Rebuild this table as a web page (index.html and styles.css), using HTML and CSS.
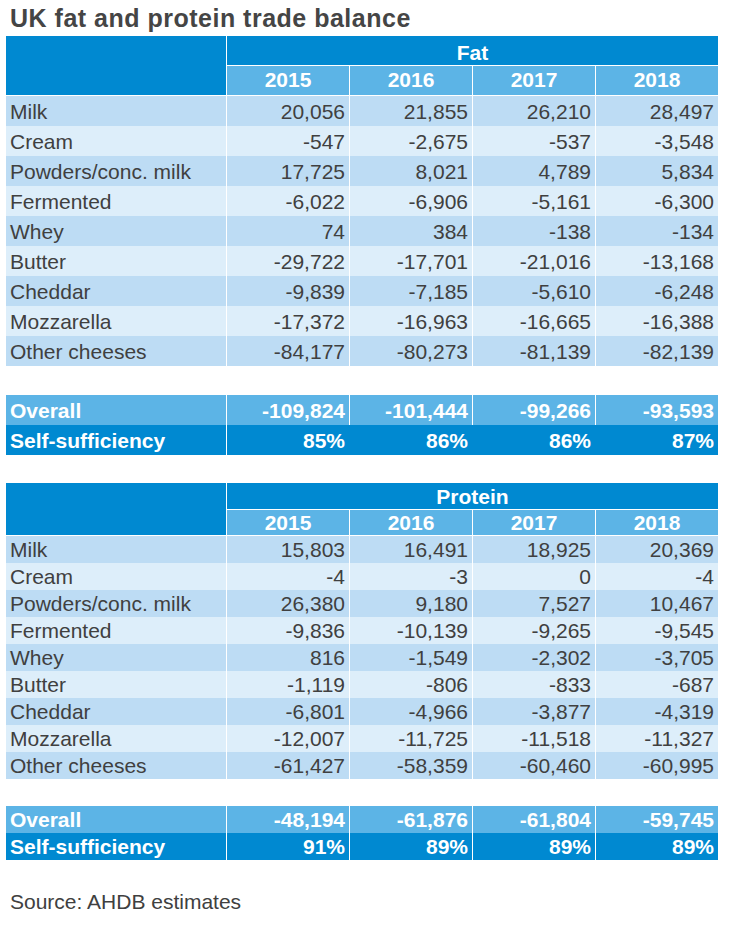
FILE: index.html
```html
<!DOCTYPE html>
<html lang="en">
<head>
<meta charset="utf-8">
<title>UK fat and protein trade balance</title>
<link rel="stylesheet" href="styles.css">
</head>
<body>
<div class="page">
  <h1 class="title">UK fat and protein trade balance</h1>

  <section class="tbl fat">
    <div class="head">
      <div class="h-label"></div>
      <div class="h-group">Fat</div>
      <div class="h-year">2015</div>
      <div class="h-year">2016</div>
      <div class="h-year">2017</div>
      <div class="h-year">2018</div>
    </div>
    <div class="row dark"><div class="lab">Milk</div><div class="num">20,056</div><div class="num">21,855</div><div class="num">26,210</div><div class="num">28,497</div></div>
    <div class="row light"><div class="lab">Cream</div><div class="num">-547</div><div class="num">-2,675</div><div class="num">-537</div><div class="num">-3,548</div></div>
    <div class="row dark"><div class="lab">Powders/conc. milk</div><div class="num">17,725</div><div class="num">8,021</div><div class="num">4,789</div><div class="num">5,834</div></div>
    <div class="row light"><div class="lab">Fermented</div><div class="num">-6,022</div><div class="num">-6,906</div><div class="num">-5,161</div><div class="num">-6,300</div></div>
    <div class="row dark"><div class="lab">Whey</div><div class="num">74</div><div class="num">384</div><div class="num">-138</div><div class="num">-134</div></div>
    <div class="row light"><div class="lab">Butter</div><div class="num">-29,722</div><div class="num">-17,701</div><div class="num">-21,016</div><div class="num">-13,168</div></div>
    <div class="row dark"><div class="lab">Cheddar</div><div class="num">-9,839</div><div class="num">-7,185</div><div class="num">-5,610</div><div class="num">-6,248</div></div>
    <div class="row light"><div class="lab">Mozzarella</div><div class="num">-17,372</div><div class="num">-16,963</div><div class="num">-16,665</div><div class="num">-16,388</div></div>
    <div class="row dark"><div class="lab">Other cheeses</div><div class="num">-84,177</div><div class="num">-80,273</div><div class="num">-81,139</div><div class="num">-82,139</div></div>
    <div class="spacer"></div>
    <div class="row overall"><div class="lab">Overall</div><div class="num">-109,824</div><div class="num">-101,444</div><div class="num">-99,266</div><div class="num">-93,593</div></div>
    <div class="row self nolines"><div class="lab">Self-sufficiency</div><div class="num">85%</div><div class="num">86%</div><div class="num">86%</div><div class="num">87%</div></div>
  </section>

  <section class="tbl protein">
    <div class="head">
      <div class="h-label"></div>
      <div class="h-group">Protein</div>
      <div class="h-year">2015</div>
      <div class="h-year">2016</div>
      <div class="h-year">2017</div>
      <div class="h-year">2018</div>
    </div>
    <div class="row dark"><div class="lab">Milk</div><div class="num">15,803</div><div class="num">16,491</div><div class="num">18,925</div><div class="num">20,369</div></div>
    <div class="row light"><div class="lab">Cream</div><div class="num">-4</div><div class="num">-3</div><div class="num">0</div><div class="num">-4</div></div>
    <div class="row dark"><div class="lab">Powders/conc. milk</div><div class="num">26,380</div><div class="num">9,180</div><div class="num">7,527</div><div class="num">10,467</div></div>
    <div class="row light"><div class="lab">Fermented</div><div class="num">-9,836</div><div class="num">-10,139</div><div class="num">-9,265</div><div class="num">-9,545</div></div>
    <div class="row dark"><div class="lab">Whey</div><div class="num">816</div><div class="num">-1,549</div><div class="num">-2,302</div><div class="num">-3,705</div></div>
    <div class="row light"><div class="lab">Butter</div><div class="num">-1,119</div><div class="num">-806</div><div class="num">-833</div><div class="num">-687</div></div>
    <div class="row dark"><div class="lab">Cheddar</div><div class="num">-6,801</div><div class="num">-4,966</div><div class="num">-3,877</div><div class="num">-4,319</div></div>
    <div class="row light"><div class="lab">Mozzarella</div><div class="num">-12,007</div><div class="num">-11,725</div><div class="num">-11,518</div><div class="num">-11,327</div></div>
    <div class="row dark"><div class="lab">Other cheeses</div><div class="num">-61,427</div><div class="num">-58,359</div><div class="num">-60,460</div><div class="num">-60,995</div></div>
    <div class="spacer"></div>
    <div class="row overall"><div class="lab">Overall</div><div class="num">-48,194</div><div class="num">-61,876</div><div class="num">-61,804</div><div class="num">-59,745</div></div>
    <div class="row self"><div class="lab">Self-sufficiency</div><div class="num">91%</div><div class="num">89%</div><div class="num">89%</div><div class="num">89%</div></div>
  </section>

  <p class="source">Source: AHDB estimates</p>
</div>
</body>
</html>
```

FILE: styles.css
```css
* { box-sizing: border-box; }

html, body {
  margin: 0;
  padding: 0;
  background: #ffffff;
}

body {
  font-family: "Liberation Sans", Arial, sans-serif;
  color: #404040;
}

.page {
  width: 732px;
  padding: 0 14px 0 6px;
}

.title {
  margin: 0;
  padding: 3px 0 0 4px;
  height: 36px;
  font-size: 25px;
  line-height: 30px;
  letter-spacing: 0.5px;
  font-weight: bold;
  color: #454545;
}

.tbl {
  width: 712px;
  font-size: 21px;
}

.head {
  display: grid;
  grid-template-columns: 220px repeat(4, 123px);
  background: #0089d1;
  color: #ffffff;
  font-weight: bold;
  text-align: center;
}

.h-label {
  grid-row: 1 / span 2;
  grid-column: 1;
  border-bottom: 1px solid #ffffff;
}

.h-group {
  grid-column: 2 / span 4;
  border-left: 1px solid #ffffff;
  border-bottom: 1px solid #ffffff;
}

.h-year {
  background: #5cb4e6;
  border-left: 1px solid #ffffff;
  border-bottom: 1px solid #ffffff;
}

.row {
  display: grid;
  grid-template-columns: 220px repeat(4, 123px);
}

.lab {
  padding-left: 4px;
  white-space: nowrap;
}

.num {
  text-align: right;
  padding-right: 4px;
  border-left: 1px solid #ffffff;
}

.dark { background: #bddcf4; }
.light { background: #ddeefa; }

.overall {
  background: #5cb4e6;
  color: #ffffff;
  font-weight: bold;
}

.self {
  background: #0089d1;
  color: #ffffff;
  font-weight: bold;
}

.nolines .num + .num { border-left-color: #0089d1; }
.protein .self .num:first-of-type { border-left-color: #0089d1; }

/* Fat table metrics */
.fat .h-group { height: 30px; line-height: 27px; padding-top: 3px; }
.fat .h-year { height: 30px; line-height: 28px; }
.fat .row > div { height: 30px; line-height: 28px; padding-top: 2px; }
.fat .spacer { height: 29px; }

/* Protein table metrics */
.protein { margin-top: 28px; }
.protein .h-group { height: 27px; line-height: 25px; padding-top: 1px; }
.protein .h-year { height: 26px; line-height: 25px; }
.protein .row > div { height: 27px; line-height: 26px; padding-top: 1px; }
.protein .spacer { height: 27px; }

.source {
  margin: 27px 0 0 4px;
  font-size: 21px;
  line-height: 30px;
  color: #404040;
}
```
